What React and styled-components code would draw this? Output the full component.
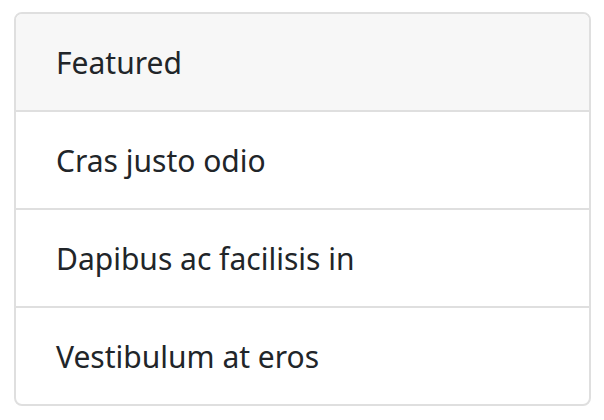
import React from 'react'
import styled, { createGlobalStyle } from 'styled-components'

const GlobalStyle = createGlobalStyle`
  * {
    box-sizing: border-box;
  }
  body {
    margin: 0;
    background: #fff;
    font-family: "Noto Sans", "Open Sans", sans-serif;
    color: #212529;
  }
`

const Page = styled.div`
  padding: 12px 13px 0 14px;
`

const Card = styled.div`
  width: 577px;
  border: 2px solid #dfdfdf;
  border-radius: 8px;
  overflow: hidden;
  background: #fff;
`

const CardHeader = styled.div`
  padding: 25px 40px 23px;
  font-size: 30px;
  line-height: 48px;
  background: #f7f7f7;
  border-bottom: 2px solid #dfdfdf;
`

const List = styled.ul`
  list-style: none;
  margin: 0;
  padding: 0;
`

const Item = styled.li`
  padding: 25px 40px 23px;
  font-size: 30px;
  line-height: 48px;
  border-top: ${({ $first }) => ($first ? 'none' : '2px solid #dfdfdf')};
`

const items = ['Cras justo odio', 'Dapibus ac facilisis in', 'Vestibulum at eros']

const App = () => {
  return (
    <>
      <GlobalStyle />
      <Page>
        <Card>
          <CardHeader>Featured</CardHeader>
          <List>
            {items.map((text, i) => (
              <Item key={text} $first={i === 0}>
                {text}
              </Item>
            ))}
          </List>
        </Card>
      </Page>
    </>
  )
}

export default App
